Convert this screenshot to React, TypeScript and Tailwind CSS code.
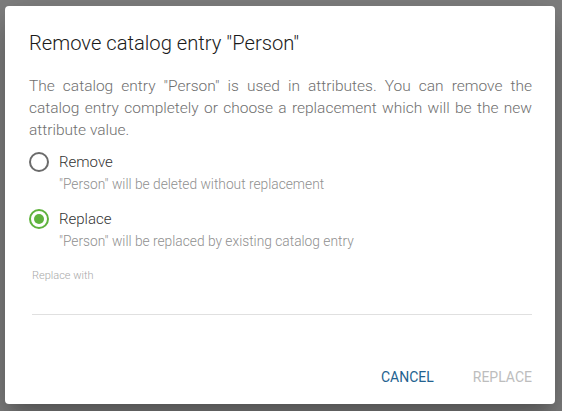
import React, { useState } from "react";

type Choice = "remove" | "replace";

const Radio: React.FC<{ checked: boolean }> = ({ checked }) => (
  <span
    className={`flex h-[20px] w-[20px] shrink-0 items-center justify-center rounded-full border-2 ${
      checked ? "border-[#5fb33d]" : "border-[#6b6b6b]"
    }`}
  >
    {checked && <span className="h-[10px] w-[10px] rounded-full bg-[#5fb33d]" />}
  </span>
);

export default function App() {
  const [choice, setChoice] = useState<Choice>("replace");

  const options: { id: Choice; label: string; hint: string }[] = [
    { id: "remove", label: "Remove", hint: '"Person" will be deleted without replacement' },
    { id: "replace", label: "Replace", hint: '"Person" will be replaced by existing catalog entry' },
  ];

  return (
    <div
      className="h-[411px] w-[562px] bg-[#808080] pl-[5px] pt-[6px]"
      style={{ fontFamily: "Roboto, 'Noto Sans', sans-serif" }}
    >
      <div className="flex h-[398px] w-[550px] flex-col rounded-[4px] bg-white pl-[24px] pr-[23px] pt-[23px] shadow-[0_11px_15px_-7px_rgba(0,0,0,0.2),0_24px_38px_3px_rgba(0,0,0,0.14),0_9px_46px_8px_rgba(0,0,0,0.12)]">
        <h2 className="text-[20.2px] font-light leading-[28px] text-[#1a1a1a]">
          Remove catalog entry "Person"
        </h2>

        <p className="mt-[18px] text-justify text-[15.5px] font-light leading-[22px] text-[#6f6f6f]">
          The catalog entry "Person" is used in attributes. You can remove the catalog entry
          completely or choose a replacement which will be the new attribute value.
        </p>

        <div className="mt-[10px] flex flex-col gap-[13px]">
          {options.map((o) => (
            <button
              key={o.id}
              type="button"
              onClick={() => setChoice(o.id)}
              className="flex items-start gap-[10px] text-left"
            >
              <span className="flex h-[22px] items-center">
                <Radio checked={choice === o.id} />
              </span>
              <span className="flex flex-col">
                <span className="text-[15px] font-light leading-[22px] text-[#333333]">{o.label}</span>
                <span className="text-[13.75px] font-light leading-[22px] text-[#8f8f8f]">{o.hint}</span>
              </span>
            </button>
          ))}
        </div>

        <div className="ml-[3px] mt-[16px] flex flex-col">
          <label className="text-[11px] font-light leading-[16px] text-[#a8a8a8]">Replace with</label>
          <div className="h-[31px] border-b border-[#e0e0e0]" />
        </div>

        <div className="mt-auto flex items-end justify-end gap-[39px] pb-[16px]">
          <button type="button" className="text-[14px] leading-[22px] uppercase text-[#24628f]">
            Cancel
          </button>
          <button type="button" disabled className="text-[14px] leading-[22px] uppercase text-[#bdbdbd]">
            Replace
          </button>
        </div>
      </div>
    </div>
  );
}
